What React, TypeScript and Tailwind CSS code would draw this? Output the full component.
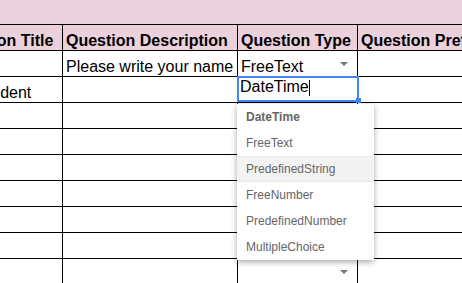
const headers = ["Question Title", "Question Description", "Question Type", "Question Prefix"];

const rows = [
    ["", "Please write your name", "FreeText", ""],
    ["Respondent", "", "", ""],
    ["", "", "", ""],
    ["", "", "", ""],
    ["", "", "", ""],
    ["", "", "", ""],
    ["", "", "", ""],
    ["", "", "", ""],
    ["", "", "", ""],
];

const widths = ["w-[119px]", "w-[175px]", "w-[120px]", "w-[200px]"];

const options = ["DateTime", "FreeText", "PredefinedString", "FreeNumber", "PredefinedNumber", "MultipleChoice"];

const Arrow = () => (
    <svg width="8" height="4" viewBox="0 0 8 4" className="absolute right-[9px] top-1/2 -translate-y-1/2">
        <path d="M0 0 L8 0 L4 4 Z" fill="#777" />
    </svg>
);

const App = () => {
    return (
        <div className="relative w-[462px] h-[283px] overflow-hidden bg-white font-['Liberation_Sans',Arial,sans-serif] text-[16px] leading-[18px] text-black">
            <div className="h-[25px] bg-[#ead1dc] border-b border-black" />

            <div className="ml-[-56px] w-[700px]">
                <div className="flex bg-[#ead1dc] font-bold">
                    {headers.map((h, i) => (
                        <div
                            key={h}
                            className={`${widths[i]} shrink-0 h-[26px] border-r border-b border-black px-[3px] flex items-end whitespace-nowrap overflow-hidden`}
                        >
                            {h}
                        </div>
                    ))}
                </div>

                {rows.map((r, ri) => (
                    <div key={ri} className="flex">
                        {r.map((c, ci) => (
                            <div
                                key={ci}
                                className={`${widths[ci]} shrink-0 relative h-[26px] border-r border-b border-black flex items-end whitespace-nowrap ${ci === 0 ? "pl-[1px] pr-[3px]" : "px-[3px]"}`}
                            >
                                {c}
                                {ci === 2 && ri !== 1 && <Arrow />}
                            </div>
                        ))}
                    </div>
                ))}
            </div>

            {/* cell being edited */}
            <div className="absolute left-[237px] top-[76px] w-[122px] h-[26px] border-2 border-[#4285f4] bg-white pl-[1px] flex items-start">
                <span>DateTime</span>
                <span className="inline-block w-px h-[16px] bg-black mt-[2px]" />
            </div>
            <div className="absolute left-[356px] top-[98px] w-[5px] h-[5px] bg-[#4285f4]" />

            {/* suggestions */}
            <div className="absolute left-[237px] top-[104px] w-[137px] bg-white shadow-[0_2px_6px_rgba(0,0,0,0.35)] text-[12px] leading-[14px] text-[#666]">
                {options.map((o, i) => (
                    <div
                        key={o}
                        className={`h-[26px] flex items-center pl-[9px] ${i === 0 ? "font-bold" : ""} ${i === 2 ? "bg-[#f3f3f3] border-y border-[#ebebeb]" : ""}`}
                    >
                        {o}
                    </div>
                ))}
            </div>
        </div>
    );
};

export default App;
